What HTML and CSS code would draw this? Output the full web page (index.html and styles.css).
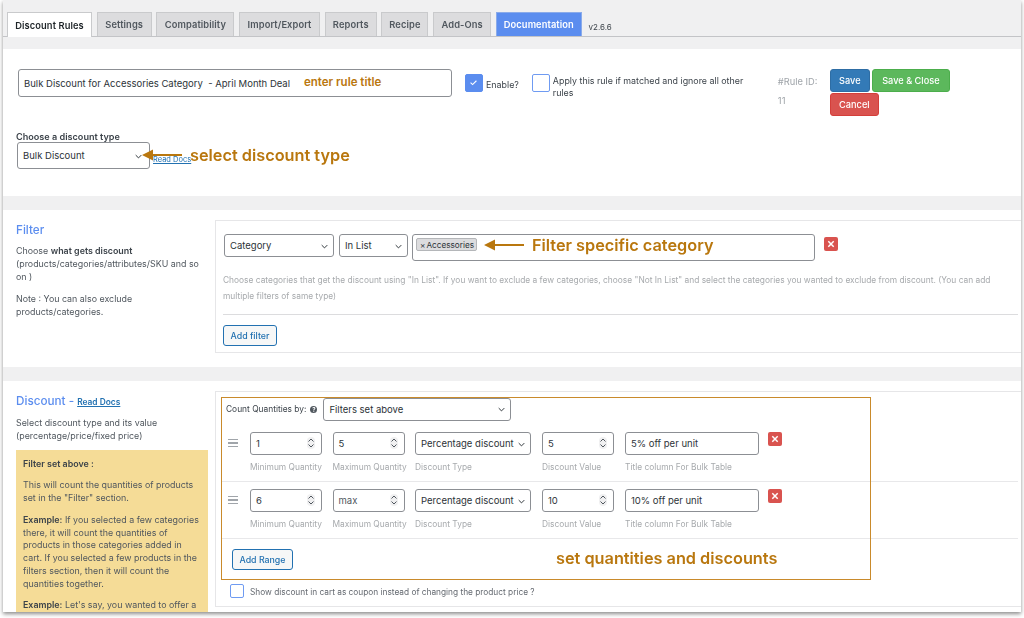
FILE: index.html
```html
<!DOCTYPE html>
<html lang="en">
<head>
<meta charset="utf-8">
<title>Discount Rules</title>
<link rel="stylesheet" href="styles.css">
</head>
<body>
<div class="window">
  <nav class="tabs">
    <a class="tab active w85">Discount Rules</a>
    <a class="tab w55">Settings</a>
    <a class="tab w78">Compatibility</a>
    <a class="tab w81">Import/Export</a>
    <a class="tab w52">Reports</a>
    <a class="tab w47">Recipe</a>
    <a class="tab w58">Add-Ons</a>
    <a class="tab doc w86">Documentation</a>
    <span class="version">v2.6.6</span>
  </nav>

  <section class="panel panel-title">
    <div class="title-row">
      <div class="field title-input">Bulk Discount for Accessories Category&nbsp; - April Month Deal</div>
      <div class="check-group enable">
        <span class="check on"><svg viewBox="0 0 18 18"><path d="M5.5 9.2l2.4 2.3 4.6-4.6" fill="none" stroke="#fff" stroke-width="1.3"/></svg></span>
        <span class="check-label">Enable?</span>
      </div>
      <div class="check-group apply">
        <span class="check"></span>
        <span class="check-label apply-label">Apply this rule if matched and ignore all other rules</span>
      </div>
      <div class="rule-id"><div>#Rule ID:</div><div class="rule-num">11</div></div>
      <div class="actions">
        <button class="btn blue">Save</button><button class="btn green">Save &amp; Close</button><button class="btn red">Cancel</button>
      </div>
    </div>
    <label class="type-label">Choose a discount type</label>
    <div class="type-row">
      <div class="field select type-select">Bulk Discount<svg class="chev" viewBox="0 0 10 6"><path d="M1 1l4 4 4-4"/></svg></div>
      <a class="docs-link">Read Docs</a>
    </div>
  </section>

  <section class="panel panel-split panel-filter">
    <aside class="side">
      <h2>Filter</h2>
      <p>Choose <b>what gets discount</b> (products/categories/attributes/SKU and so on )</p>
      <p>Note : You can also exclude products/categories.</p>
    </aside>
    <div class="box filter-box">
      <div class="filter-row">
        <div class="field select cat-select">Category<svg class="chev" viewBox="0 0 10 6"><path d="M1 1l4 4 4-4"/></svg></div>
        <div class="field select list-select">In List<svg class="chev" viewBox="0 0 10 6"><path d="M1 1l4 4 4-4"/></svg></div>
        <div class="field multi"><span class="chip"><i>×</i>Accessories</span></div>
        <span class="del del-filter"><svg viewBox="0 0 14 14"><path d="M4.3 4.3l5.4 5.4M9.7 4.3l-5.4 5.4"/></svg></span>
      </div>
      <p class="help">Choose categories that get the discount using "In List". If you want to exclude a few categories, choose "Not In List" and select the categories you wanted to exclude from discount. (You can add multiple filters of same type)</p>
      <div class="rule"></div>
      <button class="btn-outline add-filter">Add filter</button>
    </div>
  </section>

  <section class="panel panel-split panel-discount">
    <aside class="side">
      <h2>Discount - <a class="docs-inline">Read Docs</a></h2>
      <p class="select-note">Select discount type and its value (percentage/price/fixed price)</p>
      <div class="note">
        <p><b>Filter set above :</b></p>
        <p>This will count the quantities of products set in the "Filter" section.</p>
        <p><b>Example:</b> If you selected a few categories there, it will count the quantities of products in those categories added in cart. If you selected a few products in the filters section, then it will count the quantities together.</p>
        <p><b>Example:</b> Let's say, you wanted to offer a</p>
      </div>
    </aside>
    <div class="box discount-box">
      <div class="count-row">
        <span class="count-label">Count Quantities by:</span>
        <span class="help-dot">?</span>
        <div class="field select count-select">Filters set above<svg class="chev" viewBox="0 0 10 6"><path d="M1 1l4 4 4-4"/></svg></div>
      </div>
      <div class="range first">
        <div class="handle"><i></i><i></i><i></i></div>
        <div class="col c71"><div class="field num">1<svg class="spin" viewBox="0 0 8 12"><path d="M1.5 4.5L4 2l2.5 2.5M1.5 7.5L4 10l2.5-2.5"/></svg></div><small>Minimum Quantity</small></div>
        <div class="col c71"><div class="field num">5<svg class="spin" viewBox="0 0 8 12"><path d="M1.5 4.5L4 2l2.5 2.5M1.5 7.5L4 10l2.5-2.5"/></svg></div><small>Maximum Quantity</small></div>
        <div class="col c116"><div class="field select">Percentage discount<svg class="chev" viewBox="0 0 10 6"><path d="M1 1l4 4 4-4"/></svg></div><small>Discount Type</small></div>
        <div class="col c72"><div class="field num">5<svg class="spin" viewBox="0 0 8 12"><path d="M1.5 4.5L4 2l2.5 2.5M1.5 7.5L4 10l2.5-2.5"/></svg></div><small>Discount Value</small></div>
        <div class="col c134"><div class="field">5% off per unit</div><small>Title column For Bulk Table</small></div>
        <span class="del"><svg viewBox="0 0 14 14"><path d="M4.3 4.3l5.4 5.4M9.7 4.3l-5.4 5.4"/></svg></span>
      </div>
      <div class="range">
        <div class="handle"><i></i><i></i><i></i></div>
        <div class="col c71"><div class="field num">6<svg class="spin" viewBox="0 0 8 12"><path d="M1.5 4.5L4 2l2.5 2.5M1.5 7.5L4 10l2.5-2.5"/></svg></div><small>Minimum Quantity</small></div>
        <div class="col c71"><div class="field num placeholder">max<svg class="spin" viewBox="0 0 8 12"><path d="M1.5 4.5L4 2l2.5 2.5M1.5 7.5L4 10l2.5-2.5"/></svg></div><small>Maximum Quantity</small></div>
        <div class="col c116"><div class="field select">Percentage discount<svg class="chev" viewBox="0 0 10 6"><path d="M1 1l4 4 4-4"/></svg></div><small>Discount Type</small></div>
        <div class="col c72"><div class="field num">10<svg class="spin" viewBox="0 0 8 12"><path d="M1.5 4.5L4 2l2.5 2.5M1.5 7.5L4 10l2.5-2.5"/></svg></div><small>Discount Value</small></div>
        <div class="col c134"><div class="field">10% off per unit</div><small>Title column For Bulk Table</small></div>
        <span class="del"><svg viewBox="0 0 14 14"><path d="M4.3 4.3l5.4 5.4M9.7 4.3l-5.4 5.4"/></svg></span>
      </div>
      <button class="btn-outline add-range">Add Range</button>
      <div class="coupon-row">
        <span class="check small"></span>
        <span class="coupon-label">Show discount in cart as coupon instead of changing the product price ?</span>
      </div>
    </div>
  </section>

  <span class="anno a-title">enter rule title</span>
  <svg class="arrow a1" viewBox="0 0 40 12"><path d="M0 6L11 .5V4.9H40V7.1H11V11.5z"/></svg>
  <span class="anno a-type">select discount type</span>
  <svg class="arrow a2" viewBox="0 0 40 12"><path d="M0 6L11 .5V4.9H40V7.1H11V11.5z"/></svg>
  <span class="anno a-filter">Filter specific category</span>
  <div class="orange-box"></div>
  <span class="anno a-qty">set quantities and discounts</span>
</div>
</body>
</html>
```
FILE: styles.css
```css
* { box-sizing: border-box; }
html, body { margin: 0; height: 618px; overflow: hidden; background: #fff; }
body { font-family: Inter, "Liberation Sans", sans-serif; font-size: 9px; color: #3c434a; }

.window {
  position: relative;
  margin-left: 3px;
  width: 1018px;
  height: 612px;
  background: #f0f0f1;
  box-shadow: 0 2px 4px rgba(0,0,0,.45);
  overflow: hidden;
  filter: blur(.4px);
}

.tabs {
  display: flex;
  align-items: flex-end;
  gap: 4.7px;
  height: 37px;
  padding: 0 0 0 4px;
  border-bottom: 1px solid #c3c4c7;
}
.tab {
  display: flex;
  align-items: center;
  justify-content: center;
  height: 24px;
  background: #dcdcde;
  border: 1px solid #c9cacc;
  border-bottom: 0;
  font-size: 9.3px;
  font-weight: 600;
  color: #50575e;
  letter-spacing: .1px;
}
.tab.active { background: #fff; color: #1d2327; height: 25px; margin-bottom: -1px; }
.tab.doc { background: #5b8def; border-color: #8aabea; color: #fff; }
.w85 { width: 85px; } .w55 { width: 55px; } .w78 { width: 78px; } .w81 { width: 81px; }
.w52 { width: 52px; } .w47 { width: 47px; } .w58 { width: 58px; } .w86 { width: 86px; }
.version { font-size: 8px; color: #3c434a; margin: 0 0 4px 2px; }

.panel { background: #fff; }
.panel-title { margin-top: 12px; height: 147px; padding: 20px 0 0 14px; }
.title-row { display: flex; align-items: flex-start; height: 48px; }

.field {
  height: 23px;
  padding: 0 5px;
  display: flex;
  align-items: center;
  position: relative;
  background: #fff;
  border: 1px solid #8c8f94;
  border-radius: 3px;
  font-size: 9.5px;
  color: #2c3338;
  white-space: nowrap;
}
.title-input { margin-left: 1px; width: 434px; height: 28px; }
.chev {
  position: absolute;
  right: 5px;
  top: 50%;
  width: 7px;
  height: 5px;
  margin-top: -2px;
  fill: none;
  stroke: #2c3338;
  stroke-width: 1.4;
}
.type-select .chev { right: 7px; }
.spin {
  position: absolute;
  right: 6px;
  top: 4px;
  width: 8px;
  height: 12px;
  fill: none;
  stroke: #50575e;
  stroke-width: 1;
  background: #f0f0f1;
  border-radius: 4px;
}

.check-group { display: flex; align-items: flex-start; margin-top: 5px; }
.enable { margin-left: 13px; }
.apply { margin-left: 13px; }
.check {
  flex: none;
  display: block;
  width: 18px;
  height: 18px;
  border: 1.5px solid #6f9bf2;
  border-radius: 2px;
  background: #fff;
}
.check.on { background: #5b8def; border-color: #5b8def; }
.check.on svg { display: block; width: 15px; height: 15px; }
.check-label { font-size: 8.9px; line-height: 12px; margin: 5px 0 0 3px; }
.apply-label { width: 196px; margin-top: 1px; }
.rule-id { margin: 7px 0 0 29px; width: 52px; font-size: 9.3px; color: #a0a5aa; line-height: 12px; }
.rule-num { margin-top: 7px; }
.actions { display: flex; flex-wrap: wrap; gap: 1px 2px; width: 122px; }
.btn {
  height: 23px;
  padding: 0;
  border: 1px solid transparent;
  border-radius: 3px;
  color: #fff;
  font: 500 9.2px Inter, "Liberation Sans", sans-serif;
}
.blue { width: 40px; background: #337ab7; border-color: #2e6da4; }
.green { width: 78px; background: #5cb85c; border-color: #4cae4c; }
.red { width: 49px; background: #d9534f; border-color: #d43f3a; }

.type-label { display: block; margin: 15px 0 0 -1px; font-size: 9.1px; font-weight: 600; line-height: 10px; color: #3c434a; }
.type-row { display: flex; align-items: flex-end; margin-top: 0; }
.type-select { margin-left: 0; width: 133px; height: 27px; }
.docs-link { margin: 0 0 5px 3px; font-size: 7.5px; color: #2271b1; text-decoration: underline; }

.panel-split { display: flex; margin-top: 14px; }
.panel-filter { height: 157px; padding: 10px 0 14px; }
.panel-discount { height: 231px; padding-top: 10px; }
.side { flex: none; width: 212px; padding: 3px 8px 0 13px; font-size: 8.9px; line-height: 13px; color: #50575e; }
.side h2 { margin: 0 0 6px; font-size: 11.7px; line-height: 15px; font-weight: 500; color: #5b8def; }
.side p { margin: 0 0 8.5px; }
.side b { font-weight: 600; color: #3c434a; }
.docs-inline { font-size: 8.4px; font-weight: 600; color: #2271b1; text-decoration: underline; }
.select-note { margin-top: -2px; }
.side .select-note { margin-bottom: 8px; }
.note { margin: 0 -5px 0 0; width: 192px; padding: 8px 7px; background: #f5dc97; height: 200px; line-height: 12.85px; }
.side .note p { margin: 0 0 8.6px; color: #50575e; }

.box { flex: 1; border: 1px solid #e6e6e8; border-right: 0; }
.filter-box { padding: 13px 3px 0 7px; }
.filter-row { display: flex; align-items: flex-start; }
.cat-select { margin-left: 1px; width: 110px; }
.list-select { margin-left: 5px; width: 69px; }
.multi { margin-left: 4px; width: 403px; height: 27px; padding: 0 0 6px 3px; }
.chip {
  display: flex;
  align-items: center;
  height: 13px;
  padding: 0 2px 0 3px;
  background: #dcdcde;
  border: 1px solid #b4b6b9;
  border-radius: 2px;
  font-size: 8.2px;
}
.chip i { font-style: normal; margin-right: 1px; }
.del {
  flex: none;
  display: block;
  width: 14px;
  height: 14px;
  background: #d9534f;
  border-radius: 2px;
}
.del svg { display: block; fill: none; stroke: #fff; stroke-width: 1.5; }
.del-filter { margin: 3px 0 0 9px; }
.help { margin: 11px 0 0; font-size: 8.4px; line-height: 16px; color: #a7aaad; width: 790px; }
.rule { margin-top: 10px; border-top: 1px solid #dcdcde; }
.btn-outline {
  display: block;
  height: 21px;
  padding: 0;
  background: #f6f7f7;
  border: 1px solid #2271b1;
  border-radius: 3px;
  color: #2271b1;
  font: 500 8.8px Inter, "Liberation Sans", sans-serif;
}
.add-filter { width: 54px; margin-top: 10px; }

.discount-box { padding: 5px 3px 0 10px; position: relative; height: 216px; }
.count-row { display: flex; align-items: center; height: 24px; }
.count-label { font-size: 8.4px; color: #3c434a; }
.help-dot {
  margin-left: 4px;
  width: 7px;
  height: 7px;
  border-radius: 50%;
  background: #50575e;
  color: #fff;
  font-size: 6px;
  line-height: 7px;
  text-align: center;
  font-weight: 700;
}
.count-select { margin-left: 6px; width: 188px; }
.range {
  display: flex;
  align-items: flex-start;
  height: 57px;
  margin-left: -4px;
  padding-top: 7px;
  border-bottom: 1px solid #e8e8ea;
}
.range.first { height: 61px; padding-top: 11px; }
.handle { flex: none; display: flex; flex-direction: column; gap: 2px; width: 28px; padding: 7px 0 0 6px; }
.handle i { display: block; width: 10px; height: 1.3px; background: #a0a5aa; }
.col { flex: none; }
.c71 { width: 72px; margin-right: 10.5px; }
.c116 { width: 116px; margin-right: 11px; }
.c72 { width: 72px; margin-right: 11px; }
.c134 { width: 134px; margin-right: 9px; }
.col .field { width: 100%; }
.placeholder { color: #50575e; }
.col small { display: block; margin-top: 7px; font-size: 8.4px; line-height: 10px; color: #a7aaad; white-space: nowrap; }
.add-range { width: 61px; margin: 10px 0 0 6px; }
.coupon-row { display: flex; align-items: center; margin: 14px 0 0 4px; }
.check.small { width: 14px; height: 14px; border-radius: 2px; }
.coupon-label { margin: 1px 0 0 6px; font-size: 8.3px; color: #646970; }

.anno { position: absolute; font-weight: 600; color: #b9770e; white-space: nowrap; line-height: 1; }
.a-title { left: 301px; top: 77px; font-size: 11.5px; }
.a-type { left: 187px; top: 147px; font-size: 16.3px; }
.a-filter { left: 529px; top: 237px; font-size: 16.3px; }
.a-qty { left: 553px; top: 550px; font-size: 16.3px; }
.arrow { position: absolute; width: 40px; height: 12px; fill: #b9770e; }
.a1 { left: 139px; top: 149px; }
.a2 { left: 481px; top: 239px; }
.orange-box { position: absolute; left: 218px; top: 397px; width: 650px; height: 183px; border: 1px solid #c98a2b; }
```
